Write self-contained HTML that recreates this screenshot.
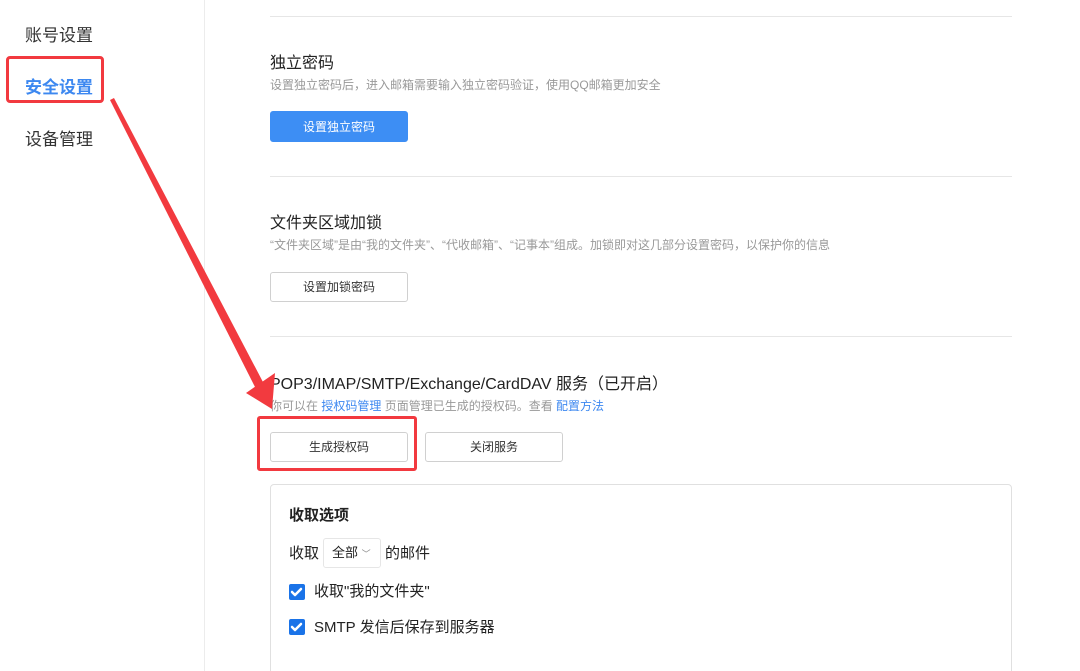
<!DOCTYPE html>
<html><head><meta charset="utf-8"><style>
html,body{margin:0;width:1080px;height:671px;overflow:hidden}
body{background:#fff;position:relative;font-family:"Liberation Sans","Noto Sans CJK SC",sans-serif;color:#222}
.a{position:absolute;white-space:nowrap}
.hr{position:absolute;left:270px;width:742px;height:1px;background:#e6e6e6}
.t{font-size:16px;color:#222}
.d{font-size:12px;color:#999}
.btn{position:absolute;height:28px;border:1px solid #d0d0d0;border-radius:3px;font-size:12px;text-align:center;line-height:28px;color:#333;box-sizing:border-box;background:#fff}
.cb{position:absolute;width:16px;height:16px;background:#1a73e8;border-radius:2px}
</style></head><body>
<div style="position:absolute;left:204px;top:0;width:1px;height:671px;background:#ececec"></div>
<div class="a" style="left:25px;top:21px;font-size:17px;color:#333">账号设置</div>
<div class="a" style="left:25px;top:73px;font-size:17px;color:#3d88f0;font-weight:bold">安全设置</div>
<div style="position:absolute;left:6px;top:56px;width:98px;height:47px;border:3px solid #f2393f;border-radius:4px;box-sizing:border-box"></div>
<div class="a" style="left:25px;top:125px;font-size:17px;color:#333">设备管理</div>

<div class="hr" style="top:16px"></div>
<div class="a t" style="left:270px;top:49px">独立密码</div>
<div class="a d" style="left:270px;top:76px">设置独立密码后，进入邮箱需要输入独立密码验证，使用QQ邮箱更加安全</div>
<div class="btn" style="left:270px;top:111px;width:138px;height:31px;line-height:31px;background:#3d8ef4;border-color:#3d8ef4;color:#fff">设置独立密码</div>
<div class="hr" style="top:176px"></div>
<div class="a t" style="left:270px;top:209px">文件夹区域加锁</div>
<div class="a d" style="left:270px;top:236px">“文件夹区域”是由“我的文件夹”、“代收邮箱”、“记事本”组成。加锁即对这几部分设置密码，以保护你的信息</div>
<div class="btn" style="left:270px;top:272px;width:138px;height:30px;line-height:29px">设置加锁密码</div>
<div class="hr" style="top:336px"></div>
<div class="a t" style="left:270px;top:370px">POP3/IMAP/SMTP/Exchange/CardDAV 服务（已开启）</div>
<div class="a d" style="left:270px;top:397px">你可以在 <span style="color:#3d88f0">授权码管理</span> 页面管理已生成的授权码。查看 <span style="color:#3d88f0">配置方法</span></div>
<div class="btn" style="left:270px;top:432px;width:138px;height:30px;line-height:29px">生成授权码</div>
<div class="btn" style="left:425px;top:432px;width:138px;height:30px;line-height:29px">关闭服务</div>
<div style="position:absolute;left:257px;top:416px;width:160px;height:55px;border:3px solid #f2393f;border-radius:3px;box-sizing:border-box"></div>

<div style="position:absolute;left:270px;top:484px;width:742px;height:200px;border:1px solid #e0e0e0;border-radius:4px;box-sizing:border-box"></div>
<div class="a" style="left:289px;top:504px;font-size:15px;font-weight:bold">收取选项</div>
<div class="a" style="left:289px;top:542px;font-size:15px">收取</div>
<div style="position:absolute;left:323px;top:538px;width:58px;height:30px;border:1px solid #e6e6e6;border-radius:3px;box-sizing:border-box;font-size:13px;line-height:28px;padding-left:8px">全部 <span style="font-size:9px;color:#888">﹀</span></div>
<div class="a" style="left:385px;top:542px;font-size:15px">的邮件</div>
<div class="cb" style="left:289px;top:584px"></div>
<div class="a" style="left:314px;top:580px;font-size:15px">收取"我的文件夹"</div>
<div class="cb" style="left:289px;top:619px"></div>
<div class="a" style="left:314px;top:616px;font-size:15px">SMTP 发信后保存到服务器</div>
<svg style="position:absolute;left:0;top:0" width="1080" height="671">
<g fill="none" stroke="#fff" stroke-width="2.5" stroke-linecap="round" stroke-linejoin="round"><path d="M292 592l3 3 6-6"/><path d="M292 627l3 3 6-6"/></g>
<polygon points="110,100 114,98 264,384 256,389" fill="#f23a3f"/>
<polygon points="246,393 275,373 272,409" fill="#f23a3f"/>
</svg>
</body></html>
